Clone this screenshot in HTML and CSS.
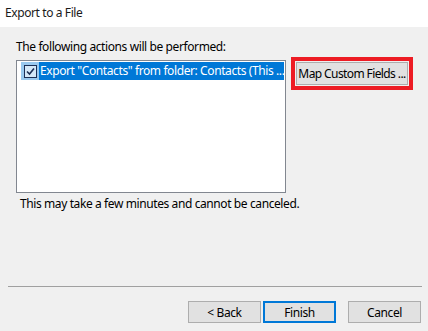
FILE: index.html
```html
<!DOCTYPE html>
<html lang="en">
<head>
<meta charset="UTF-8">
<title>Export to a File</title>
<link rel="stylesheet" href="styles.css">
</head>
<body>

<div class="dialog">
  <div class="titlebar">Export to a File</div>

  <div class="content">
    <p class="label">The following actions will be performed:</p>

    <div class="row">
      <div class="listbox">
        <div class="item">
          <span class="check-cell">
            <svg width="13" height="13" viewBox="0 0 13 13">
              <rect x="0.5" y="0.5" width="12" height="12" fill="#d4e8f8" stroke="#1c2f55"/>
              <path d="M3 6.5 L5.5 9 L10 3.5" fill="none" stroke="#1c2f55" stroke-width="1.6"/>
            </svg>
          </span>
          <span class="item-text">Export "Contacts" from folder: Contacts (This ...</span>
        </div>
      </div>

      <div class="highlight">
        <button class="btn map-btn">Map Custom Fields ...</button>
      </div>
    </div>

    <p class="note">This may take a few minutes and cannot be canceled.</p>
  </div>

  <div class="footer">
    <div class="separator"></div>
    <div class="buttons">
      <button class="btn">&lt; Back</button>
      <button class="btn default">Finish</button>
      <button class="btn cancel">Cancel</button>
    </div>
  </div>
</div>

</body>
</html>
```

FILE: styles.css
```css
/* dialog */
body {
  margin: 0;
  font-family: "Noto Sans", "Liberation Sans", sans-serif;
  font-size: 12px;
  letter-spacing: -0.4px;
  color: #000;
}
.dialog {
  width: 428px;
  height: 331px;
  background: #f0f0f0;
  display: flex;
  flex-direction: column;
}
.titlebar {
  height: 27px;
  line-height: 26px;
  padding-left: 5px;
  background: #fff;
  color: #1a1a1a;
}

/* main area */
.content {
  flex: 1;
  padding-left: 16px;
}
.label {
  margin: 12px 0 0 0;
  line-height: 16px;
}
.row {
  display: flex;
  align-items: flex-start;
  margin-top: 5px;
}
.listbox {
  width: 268px;
  height: 131px;
  border: 1px solid #828790;
  background: #fff;
}
.item {
  display: flex;
  height: 18px;
  margin: 1px 1px 0 4px;
}
.check-cell {
  width: 18px;
  background: #99c9ef;
  display: flex;
  align-items: center;
  padding-left: 3px;
  box-sizing: border-box;
}
.check-cell svg {
  display: block;
}
.item-text {
  flex: 1;
  background: #0078d7;
  color: #fff;
  line-height: 17px;
  padding-left: 1px;
  white-space: nowrap;
  overflow: hidden;
}
.highlight {
  margin: -3px 0 0 5px;
  border: 4px solid #ed1c24;
  padding: 1px;
}
.note {
  margin: 3px 0 0 4px;
  line-height: 16px;
}

/* buttons */
.btn {
  font-family: inherit;
  font-size: 12px;
  letter-spacing: inherit;
  white-space: nowrap;
  width: 73px;
  height: 22px;
  padding: 0;
  background: #e1e1e1;
  border: 1px solid #adadad;
  color: #000;
}
.map-btn {
  width: 112px;
  height: 23px;
  display: block;
  letter-spacing: -0.6px;
}
.btn.default {
  border: 2px solid #0078d7;
  margin-left: 2px;
}
.btn.cancel {
  margin-left: 12px;
}
.footer {
  padding: 0 7px 8px 8px;
}
.separator {
  height: 1px;
  background: #a0a0a0;
  margin-right: -1px;
  margin-bottom: 14px;
}
.buttons {
  display: flex;
  justify-content: flex-end;
}
```
